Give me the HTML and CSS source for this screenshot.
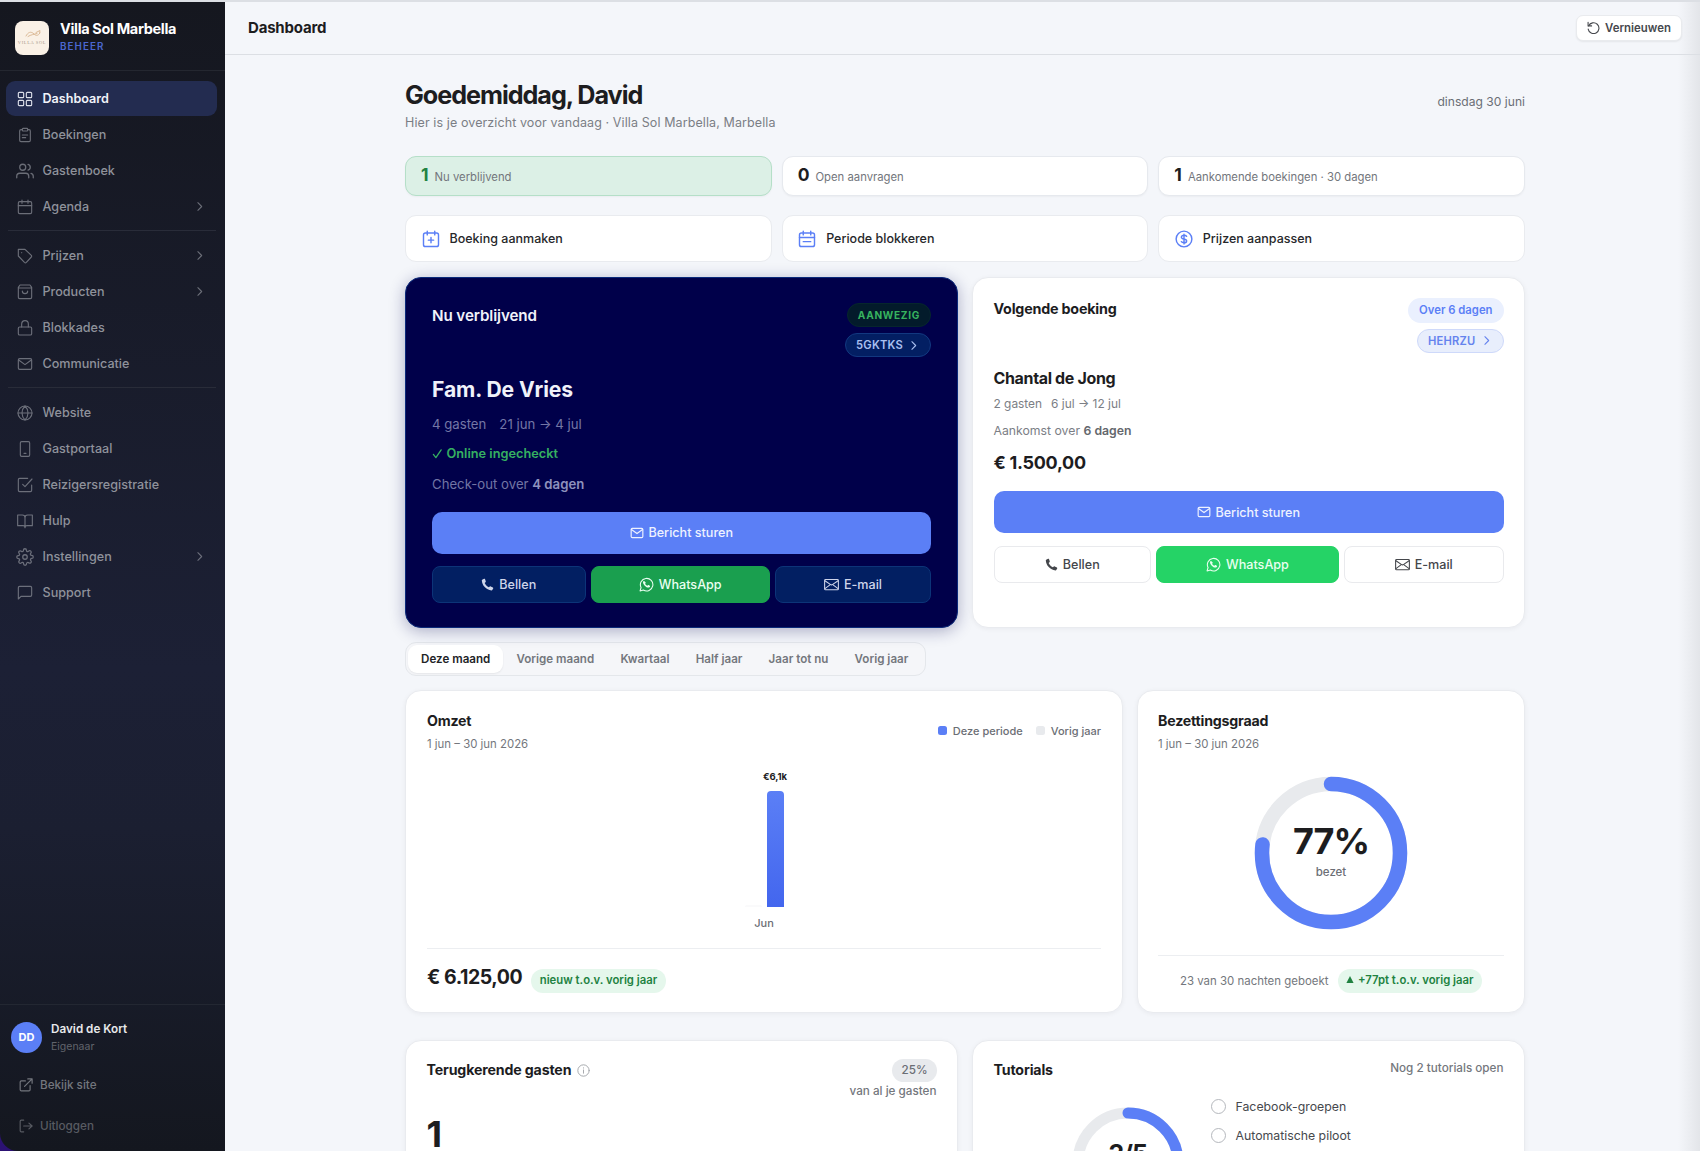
FILE: index.html
```html
<!DOCTYPE html>
<html lang="nl">
<head>
<meta charset="utf-8">
<title>Dashboard</title>
<link rel="stylesheet" href="styles.css">
</head>
<body>
<svg class="defs" width="0" height="0" aria-hidden="true">
  <symbol id="chev" viewBox="0 0 24 24"><path d="m9 5 7 7-7 7"/></symbol>
  <symbol id="mail" viewBox="0 0 24 24"><rect x="2" y="4" width="20" height="16" rx="2"/><path d="m2.500 6 9.500 7 9.500-7"/></symbol>
  <symbol id="phone" viewBox="0 0 24 24"><path fill="currentColor" stroke="none" d="M2.200 3.200 5.600 1.300c.7-.3 1.400 0 1.700.7l1.500 4.200c.2.600 0 1.200-.5 1.600L6.700 9.200c1.600 3.400 4.300 6.300 7.700 8l1.900-1.500c.5-.4 1.100-.5 1.600-.2l4.100 2.100c.7.300.9 1.100.5 1.700l-1.700 3c-.3.500-.8.700-1.300.6C9.500 21.500 2 13.500 1.500 4.400c0-.5.200-.9.700-1.200z"/></symbol>
  <symbol id="wa" viewBox="0 0 24 24"><path d="M1.700 22.300l1.600-5.500A10 10 0 1 1 7 20.800z"/><path fill="currentColor" stroke="none" d="M8.600 6.600c-.3-.5-.9-.5-1.300-.1C5.600 8.300 6.200 11 9.200 14c3 3 6.100 3.900 8 2 .6-.7.700-1.700.1-2l-2-1.100c-.4-.2-.8-.1-1.100.3l-.7.900c-1.500-.5-3-1.900-3.700-3.500l.8-.9c.3-.3.300-.7.100-1.100z"/></symbol>
  <symbol id="env" viewBox="0 0 24 24"><rect x="1" y="4" width="22" height="16.500" rx="1.500"/><path d="m1.500 6 8.500 5.800c1.200.9 2.800.9 4 0L22.500 6M1.500 18.500 9 13M22.500 18.500 15 13"/></symbol>
</svg>
<div class="app">
  <aside class="sidebar">
    <div class="brand">
      <svg class="logo" viewBox="0 0 34 34"><rect width="34" height="34" rx="8" fill="#faf1e6"/><path d="M11 15c2-4 5-5 8-2 2 2 4 2 6-1M13 15.500c3-2 6-2 9-3M21 11.500l4-2-.5 3" fill="none" stroke="#dcbb98" stroke-width="1"/><text x="17" y="23" text-anchor="middle" class="logo-text">VILLA SOL</text></svg>
      <div><div class="brand-name">Villa Sol Marbella</div><div class="brand-sub">BEHEER</div></div>
    </div>
    <nav class="nav">
      <a class="item active"><svg viewBox="0 0 24 24"><rect x="2" y="2" width="8" height="8" rx="1.500"/><rect x="14" y="2" width="8" height="8" rx="1.500"/><rect x="2" y="14" width="8" height="8" rx="1.500"/><rect x="14" y="14" width="8" height="8" rx="1.500"/></svg>Dashboard</a>
      <a class="item"><svg viewBox="0 0 24 24"><path d="M8 4H6a2 2 0 0 0-2 2v14a2 2 0 0 0 2 2h12a2 2 0 0 0 2-2V6a2 2 0 0 0-2-2h-2"/><rect x="8" y="2" width="8" height="4" rx="1"/><path d="M8 12h8M8 16h5"/></svg>Boekingen</a>
      <a class="item"><svg class="wide" viewBox="0 0 24 24"><path d="M17 21v-2a4 4 0 0 0-4-4H5a4 4 0 0 0-4 4v2"/><circle cx="9" cy="7" r="4"/><path d="M23 21v-2a4 4 0 0 0-3-3.870M16 3.130a4 4 0 0 1 0 7.750"/></svg>Gastenboek</a>
      <a class="item"><svg viewBox="0 0 24 24"><rect x="2" y="4" width="20" height="18" rx="2"/><path d="M2 10h20M7.500 1.500v5M16.500 1.500v5"/></svg>Agenda<svg class="chev"><use href="#chev"/></svg></a>
      <hr>
      <a class="item"><svg viewBox="0 0 24 24"><path d="M21.500 13.500 14 21.500a2 2 0 0 1-2.800 0L2 12V2h10l9.500 9a2 2 0 0 1 0 2.500z"/><path d="M7 7h.01"/></svg>Prijzen<svg class="chev"><use href="#chev"/></svg></a>
      <a class="item"><svg viewBox="0 0 24 24"><path d="M4.500 1.500 2 5V20a2 2 0 0 0 2 2h16a2 2 0 0 0 2-2V5l-2.500-3.500zM2 6h20M16 10.500a4 4 0 0 1-8 0"/></svg>Producten<svg class="chev"><use href="#chev"/></svg></a>
      <a class="item"><svg viewBox="0 0 24 24"><rect x="2" y="10.500" width="20" height="12" rx="2"/><path d="M7 10.500V6a5 5 0 0 1 10 0v4.500"/></svg>Blokkades</a>
      <a class="item"><svg><use href="#mail"/></svg>Communicatie</a>
      <hr>
      <a class="item"><svg viewBox="0 0 24 24"><circle cx="12" cy="12" r="10.500"/><path d="M1.500 12h21M12 1.500c6 6 6 15 0 21M12 1.500c-6 6-6 15 0 21"/></svg>Website</a>
      <a class="item"><svg viewBox="0 0 24 24"><rect x="5" y="1" width="14" height="22" rx="2"/><path d="M10.500 18.500h3"/></svg>Gastportaal</a>
      <a class="item"><svg viewBox="0 0 24 24"><path d="m8.500 11 3.500 3.500L22.500 3"/><path d="M22 12v8a2 2 0 0 1-2 2H4a2 2 0 0 1-2-2V4a2 2 0 0 1 2-2h12"/></svg>Reizigersregistratie</a>
      <a class="item"><svg viewBox="0 0 24 24"><path d="M1 3h7a4 4 0 0 1 4 4v15a3 3 0 0 0-3-3H1zM23 3h-7a4 4 0 0 0-4 4v15a3 3 0 0 1 3-3h8z"/></svg>Hulp</a>
      <a class="item"><svg class="wide" viewBox="0 0 24 24"><circle cx="12" cy="12" r="3"/><path d="M19.400 15a1.650 1.650 0 0 0 .33 1.820l.06.060a2 2 0 1 1-2.830 2.830l-.06-.06a1.650 1.650 0 0 0-2.800 1.170V21a2 2 0 0 1-4 0v-.09a1.650 1.650 0 0 0-2.900-1.180l-.06.060a2 2 0 1 1-2.830-2.830l.06-.06a1.650 1.650 0 0 0-1.170-2.800H3a2 2 0 0 1 0-4h.09a1.650 1.650 0 0 0 1.180-2.900l-.06-.06a2 2 0 1 1 2.830-2.830l.06.060a1.650 1.650 0 0 0 2.800-1.170V3a2 2 0 0 1 4 0v.09a1.650 1.650 0 0 0 2.900 1.180l.06-.06a2 2 0 1 1 2.830 2.830l-.06.060a1.650 1.650 0 0 0 1.170 2.800H21a2 2 0 0 1 0 4h-.09a1.650 1.650 0 0 0-1.510 1z"/></svg>Instellingen<svg class="chev"><use href="#chev"/></svg></a>
      <a class="item"><svg viewBox="0 0 24 24"><path d="M22 15a2 2 0 0 1-2 2H6l-4 4V4a2 2 0 0 1 2-2h16a2 2 0 0 1 2 2z"/></svg>Support</a>
    </nav>
    <div class="account">
      <div class="user"><span class="avatar">DD</span><div><div class="user-name">David de Kort</div><div class="user-role">Eigenaar</div></div></div>
      <a class="link"><svg viewBox="0 0 24 24"><path d="M19 13v7a2 2 0 0 1-2 2H4a2 2 0 0 1-2-2V7a2 2 0 0 1 2-2h7M15 1.500h7.500V9M9.500 14.500l13-13"/></svg>Bekijk site</a>
      <a class="link dim"><svg viewBox="0 0 24 24"><path d="M8 2H4a2 2 0 0 0-2 2v16a2 2 0 0 0 2 2h4M17 17l5.500-5L17 7M22 12H8"/></svg>Uitloggen</a>
    </div>
  </aside>

  <div class="main">
    <header class="topbar">
      <h2>Dashboard</h2>
      <button class="refresh"><svg viewBox="0 0 24 24"><path d="M2 2.500v6.500h6.500"/><path d="M3 9a10 10 0 1 1-.8 6"/></svg>Vernieuwen</button>
    </header>
    <main class="content">
      <div class="hello">
        <div><h1>Goedemiddag, David</h1><p>Hier is je overzicht voor vandaag · Villa Sol Marbella, Marbella</p></div>
        <span class="date">dinsdag 30 juni</span>
      </div>
      <div class="thirds stats">
        <div class="stat green"><b>1</b><span>Nu verblijvend</span></div>
        <div class="stat"><b>0</b><span>Open aanvragen</span></div>
        <div class="stat"><b>1</b><span>Aankomende boekingen · 30 dagen</span></div>
      </div>
      <div class="thirds actions">
        <a class="action"><svg viewBox="0 0 24 24"><rect x="2" y="4" width="20" height="18" rx="2.500"/><path d="M7 1.500v5M17 1.500v5M12 10v7M8.500 13.500h7"/></svg>Boeking aanmaken</a>
        <a class="action"><svg viewBox="0 0 24 24"><rect x="2" y="4" width="20" height="18" rx="2.500"/><path d="M7 1.500v5M17 1.500v5M2 10h20M7 15.500h10"/></svg>Periode blokkeren</a>
        <a class="action"><svg viewBox="0 0 24 24"><circle cx="12" cy="12" r="10.500"/><path d="M15.500 8.500c-.6-1-1.800-1.500-3.500-1.500-2 0-3.500.9-3.500 2.500 0 3.500 7 1.500 7 5 0 1.600-1.500 2.500-3.500 2.500-1.700 0-2.900-.5-3.500-1.500M12 5.500v13"/></svg>Prijzen aanpassen</a>
      </div>
      <div class="stays">
        <section class="card stay now">
          <div class="stay-head"><h3>Nu verblijvend</h3><div class="pills"><span class="pill present">AANWEZIG</span><span class="pill code">5GKTKS<svg><use href="#chev"/></svg></span></div></div>
          <div class="name">Fam. De Vries</div>
          <div class="meta"><span>4 gasten</span><span>21 jun → 4 jul</span></div>
          <div class="checked"><svg viewBox="0 0 24 24"><path d="m3 14 5.500 7L20 4"/></svg>Online ingecheckt</div>
          <div class="when">Check-out over <b>4 dagen</b></div>
          <button class="primary"><svg><use href="#mail"/></svg>Bericht sturen</button>
          <div class="contact"><button><svg><use href="#phone"/></svg>Bellen</button><button class="wa"><svg><use href="#wa"/></svg>WhatsApp</button><button><svg><use href="#env"/></svg>E-mail</button></div>
        </section>
        <section class="card stay next">
          <div class="stay-head"><h3>Volgende boeking</h3><div class="pills"><span class="pill soon">Over 6 dagen</span><span class="pill code">HEHRZU<svg><use href="#chev"/></svg></span></div></div>
          <div class="name">Chantal de Jong</div>
          <div class="meta"><span>2 gasten</span><span>6 jul → 12 jul</span></div>
          <div class="when">Aankomst over <b>6 dagen</b></div>
          <div class="price">€ 1.500,00</div>
          <button class="primary"><svg><use href="#mail"/></svg>Bericht sturen</button>
          <div class="contact"><button><svg><use href="#phone"/></svg>Bellen</button><button class="wa"><svg><use href="#wa"/></svg>WhatsApp</button><button><svg><use href="#env"/></svg>E-mail</button></div>
        </section>
      </div>
      <div class="tabs"><span class="on">Deze maand</span><span>Vorige maand</span><span>Kwartaal</span><span>Half jaar</span><span>Jaar tot nu</span><span>Vorig jaar</span></div>
      <div class="charts">
        <section class="card revenue">
          <div class="chart-head"><div><h4>Omzet</h4><p>1 jun – 30 jun 2026</p></div><div class="legend"><i></i>Deze periode<i class="grey"></i>Vorig jaar</div></div>
          <div class="bars">
            <div class="pair"><div class="prev"></div><div class="cur"><span>€6,1k</span><div class="bar"></div></div></div>
            <div class="month">Jun</div>
          </div>
          <div class="total"><strong>€ 6.125,00</strong><span class="up">nieuw t.o.v. vorig jaar</span></div>
        </section>
        <section class="card occupancy">
          <h4>Bezettingsgraad</h4><p>1 jun – 30 jun 2026</p>
          <div class="donut">
            <svg viewBox="0 0 154 154"><circle cx="77" cy="77" r="69" fill="none" stroke="#e8eaed" stroke-width="14.500"/><circle cx="77" cy="77" r="69" fill="none" stroke="#5b7ff6" stroke-width="14.500" stroke-linecap="round" pathLength="100" stroke-dasharray="77 100" transform="rotate(-90 77 77)"/></svg>
            <div class="donut-text"><strong>77%</strong><span>bezet</span></div>
          </div>
          <div class="nights"><span>23 van 30 nachten geboekt</span><span class="up"><svg viewBox="0 0 10 10"><path d="M5 .5 9.500 9.500h-9z"/></svg>+77pt t.o.v. vorig jaar</span></div>
        </section>
      </div>
      <div class="bottom">
        <section class="card returning">
          <div class="row"><h4>Terugkerende gasten<svg viewBox="0 0 24 24"><circle cx="12" cy="12" r="10.500"/><path d="M12 11v6M12 7v.5"/></svg></h4><div class="share"><span>25%</span><em>van al je gasten</em></div></div>
          <div class="count">1</div>
        </section>
        <section class="card tutorials">
          <div class="row"><h4>Tutorials</h4><em>Nog 2 tutorials open</em></div>
          <div class="tut">
            <div class="donut small"><svg viewBox="0 0 112 112"><circle cx="56" cy="56" r="50" fill="none" stroke="#e8eaed" stroke-width="11"/><circle cx="56" cy="56" r="50" fill="none" stroke="#5b7ff6" stroke-width="11" stroke-linecap="round" pathLength="100" stroke-dasharray="60 100" transform="rotate(-90 56 56)"/></svg><div class="donut-text"><strong>3/5</strong></div></div>
            <ul><li><i></i>Facebook-groepen</li><li><i></i>Automatische piloot</li></ul>
          </div>
        </section>
      </div>
    </main>
  </div>
</div>
</body>
</html>
```
FILE: styles.css
```css
* { box-sizing: border-box; margin: 0; padding: 0; }
body { width: 1700px; height: 1151px; overflow: hidden; background: #f4f6fa; font-family: Inter, "Liberation Sans", sans-serif; color: #1d1d1f; -webkit-font-smoothing: antialiased; }
svg { fill: none; stroke: currentColor; stroke-width: 2; stroke-linecap: round; stroke-linejoin: round; flex: none; }
.defs { position: absolute; }
button { font-family: inherit; }
.app { display: flex; height: 1151px; border-top: 2px solid #dcdfe4; background: #2c1273; overflow: hidden; }

.sidebar { width: 225px; height: 1149px; display: flex; flex-direction: column; background: linear-gradient(180deg, #15171f 0%, #1c2035 58%, #1b1f31 72%, #14171f 100%); border-bottom-left-radius: 18px; }
.brand { height: 69px; display: flex; gap: 11px; padding: 19px 0 0 15px; border-bottom: 1px solid #242730; }
.logo { width: 34px; height: 34px; stroke: none; }
.logo-text { font: 4.500px "Liberation Serif", serif; letter-spacing: .6px; fill: #a99a8c; stroke: none; }
.brand-name { font-size: 14.500px; font-weight: 700; line-height: 18px; letter-spacing: -.35px; color: #fff; margin-top: -1px; white-space: nowrap; }
.brand-sub { font-size: 9.800px; font-weight: 600; letter-spacing: 1.100px; line-height: 14px; color: #4b67cf; margin-top: 2px; }
.nav { flex: 1; padding: 10px 8px 0 6px; display: flex; flex-direction: column; gap: 1px; }
.item { height: 35px; border-radius: 9px; display: flex; align-items: center; padding: 0 11px; color: #8f929b; font-size: 12.600px; font-weight: 500; }
.item svg { width: 16px; height: 16px; margin-right: 9.500px; stroke-width: 1.700; opacity: .7; }
.item svg.wide { width: 18px; height: 18px; margin: 0 8.500px 0 -1px; }
.item svg.chev { width: 13px; height: 13px; margin: 0 0 0 auto; stroke-width: 2; }
.item.active { background: #232c50; color: #f1f3fa; font-weight: 600; }
.item.active svg { opacity: .9; }
.nav hr { border: 0; height: 1px; background: #292c39; margin: 5px 1px 6px 2px; }
.account { height: 147px; border-top: 1px solid #232732; padding: 15px 0 0 11px; }
.user { display: flex; gap: 9px; height: 34px; align-items: center; }
.avatar { width: 31px; height: 31px; border-radius: 50%; background: #5b7ff6; color: #fff; font-size: 11px; font-weight: 700; display: grid; place-items: center; }
.user-name { font-size: 11.700px; font-weight: 600; line-height: 18px; color: #e7e8ea; }
.user-role { font-size: 10.500px; line-height: 16px; color: #61646c; margin-top: 1px; }
.link { display: flex; align-items: center; height: 40.500px; padding-left: 8px; font-size: 11.700px; font-weight: 500; color: #73767d; margin-top: 11px; }
.link.dim { color: #585b62; margin-top: 0; }
.link svg { width: 14px; height: 14px; margin-right: 7px; }

.main { flex: 1; background: linear-gradient(90deg, transparent 1453px, #e3e5e9 1475px), #f4f6fa; }
.topbar { height: 53px; border-bottom: 1px solid #dcdfe4; padding: 0 18px 1px 23px; display: flex; align-items: center; justify-content: space-between; }
.topbar h2 { font-size: 15px; font-weight: 700; letter-spacing: -.2px; }
.refresh { width: 106px; height: 26px; border: 1px solid #e9ebee; border-radius: 7px; background: #fff; box-shadow: 0 1px 2px #0001; font-size: 11.400px; font-weight: 600; color: #46484d; display: flex; align-items: center; justify-content: center; gap: 5px; }
.refresh svg { width: 13px; height: 13px; }
.content { width: 1120px; margin: 0 0 0 180px; }
.hello { height: 101px; display: flex; justify-content: space-between; padding-top: 23px; }
h1 { font-size: 25.200px; font-weight: 700; letter-spacing: -1.050px; line-height: 35px; }
.hello p { font-size: 12.500px; line-height: 20px; color: #7b7e85; letter-spacing: .1px; }
.date { font-size: 12.100px; line-height: 20px; color: #6b6e75; margin-top: 14px; }
.thirds { display: grid; grid-template-columns: repeat(3, 1fr); gap: 10px; }
.stat { height: 40px; background: #fff; border: 1px solid #e6e9ee; border-radius: 11px; box-shadow: 0 1px 2px #0000000a; display: flex; align-items: baseline; gap: 6px; padding: 6px 0 0 15px; }
.stat b { font-size: 17.500px; line-height: 24px; }
.stat span { font-size: 11.300px; color: #73767c; }
.stat.green { background: #dcf0e6; border-color: #b5dfc8; }
.stat.green b { color: #218241; }
.actions { margin-top: 19px; }
.action { height: 47px; background: #fff; border: 1px solid #e9ebef; border-radius: 11px; display: flex; align-items: center; gap: 10px; padding-left: 15.500px; font-size: 12.500px; font-weight: 500; color: #26272a; }
.action svg { width: 18px; height: 18px; color: #5b7ff6; stroke-width: 1.900; }

.card { background: #fff; border: 1px solid #e9ebef; border-radius: 16px; box-shadow: 0 1px 5px #1018280d; }
.stays { display: grid; grid-template-columns: 1fr 1fr; gap: 14px; margin-top: 15px; }
.stay { height: 351px; padding: 20px 20.500px; }
.stay.now { padding: 25px 26px; background: #00004a; border-color: #0b2a7a; box-shadow: 0 3px 16px #14185c55; color: #f0f2fa; }
.stay-head { display: flex; justify-content: space-between; height: 68px; }
.now .stay-head { height: 70px; }
h3 { font-size: 14.300px; font-weight: 700; line-height: 21px; letter-spacing: -.2px; }
.now h3 { margin-top: 1.500px; font-size: 15.200px; font-weight: 600; letter-spacing: -.1px; }
.pills { display: flex; flex-direction: column; align-items: flex-end; gap: 6px; }
.pill { height: 24px; display: flex; align-items: center; border-radius: 13px; padding: 0 10px; border: 1px solid transparent; font-size: 11.200px; font-weight: 600; }
.pill.present { background: #031b2b; border-color: #06262d; color: #37b35f; font-size: 10.100px; font-weight: 700; letter-spacing: .7px; }
.pill.soon { height: 25px; background: #eaf0fe; color: #5b7ff6; font-size: 11.300px; margin-top: -.5px; }
.pill.code { color: #6583ee; background: #e8eefc; border-color: #ced9fa; letter-spacing: .2px; }
.pill svg { width: 13px; height: 13px; margin-left: 4px; }
.now .pill.code { background: #031f63; border-color: #123880; color: #a9bff0; }
.name { font-size: 16px; font-weight: 700; letter-spacing: -.35px; line-height: 24px; }
.now .name { font-size: 21.100px; line-height: 30px; margin-top: 1.500px; letter-spacing: -.1px; }
.meta { display: flex; gap: 9px; font-size: 11.900px; line-height: 18px; color: #7b7e85; margin-top: 5px; }
.now .meta { font-size: 13.200px; gap: 13px; margin-top: 10.500px; color: #7477a6; }
.checked { font-size: 12.750px; font-weight: 600; line-height: 18px; color: #35b061; margin-top: 11.500px; display: flex; align-items: center; gap: 3.500px; }
.checked svg { width: 11px; height: 11px; stroke-width: 2.800; }
.when { font-size: 12.250px; line-height: 18px; color: #7b7e85; margin-top: 9px; }
.when b { font-weight: 600; color: #64676d; }
.now .when { font-size: 13.200px; color: #7275a4; margin-top: 12px; }
.now .when b { color: #8e92bd; }
.price { font-size: 18px; font-weight: 700; line-height: 24px; margin-top: 11px; letter-spacing: -.3px; }
.primary { width: 100%; height: 42px; border: 0; border-radius: 10px; background: #5b7ff6; color: #eef2ff; font-size: 12.600px; font-weight: 500; display: flex; align-items: center; justify-content: center; gap: 4.500px; margin-top: 16px; }
.now .primary { margin-top: 19px; }
.primary svg { width: 14px; height: 14px; }
.contact { display: grid; grid-template-columns: 157.500px 183px 159.500px; gap: 5px; margin-top: 12.500px; }
.now .contact { grid-template-columns: 153.500px 179.500px 156px; }
.contact button { height: 37px; border: 1px solid #e9eaed; border-radius: 8px; background: #fff; color: #44464b; font-size: 12.600px; font-weight: 500; display: flex; align-items: center; justify-content: center; gap: 5px; }
.contact svg { width: 15px; height: 15px; stroke-width: 1.700; }
.contact button:first-child svg { width: 13px; height: 13px; }
.contact button.wa { background: #25d366; border-color: #25d366; color: #e9fff0; }
.now .contact button { background: #021f62; border-color: #0c3478; color: #cfd5ea; }
.now .contact button.wa { background: #1a9f4f; border-color: #1a9f4f; color: #eafff1; }

.tabs { width: 521px; height: 34px; margin-top: 14px; border: 1px solid #e4e7eb; border-radius: 11px; background: #f5f6f9; display: flex; align-items: center; padding-left: 2px; font-size: 11.600px; font-weight: 600; color: #74777d; white-space: nowrap; }
.tabs span { height: 28px; line-height: 28px; padding: 0 13.100px; }
.tabs .on { border-radius: 9px; background: #fff; box-shadow: 0 1px 2px #0001; color: #222326; }
.charts { display: grid; grid-template-columns: 718px 388px; gap: 14px; margin-top: 14px; }
.revenue, .occupancy { height: 323px; padding: 20px 21px 0; }
.occupancy { padding: 20px 20px 0; }
h4 { font-size: 14.200px; font-weight: 700; line-height: 20px; letter-spacing: -.2px; white-space: nowrap; }
.chart-head { display: flex; justify-content: space-between; align-items: center; height: 41px; }
.card p { font-size: 11.400px; line-height: 16px; margin-top: 5px; color: #74777d; }
.legend { display: flex; align-items: center; font-size: 11px; font-weight: 500; color: #6b6e75; height: 20px; margin-top: -2px; }
.legend i { width: 9px; height: 9px; border-radius: 2.500px; background: #5b7ff6; margin-right: 6px; }
.legend i.grey { background: #e8eaed; margin-left: 13px; }
.bars { height: 197px; border-bottom: 1px solid #eceef1; display: flex; flex-direction: column; align-items: center; padding-top: 17px; }
.pair { display: flex; align-items: flex-end; gap: 5px; height: 138px; }
.prev { width: 17px; height: 2px; background: #fafafb; border-radius: 2px 2px 0 0; }
.cur { width: 17px; display: flex; flex-direction: column; align-items: center; }
.cur span { font-size: 9.500px; font-weight: 700; line-height: 14px; margin-bottom: 7px; letter-spacing: -.1px; }
.bar { width: 17px; height: 116px; border-radius: 4px 4px 0 0; background: linear-gradient(#5b7ff6, #4366ee); }
.month { font-size: 11px; font-weight: 500; line-height: 14px; margin-top: 9px; color: #6b6e75; }
.total { display: flex; align-items: center; gap: 9px; height: 56px; }
.total strong { font-size: 19.500px; letter-spacing: -.45px; }
.up { height: 24px; line-height: 22px; border-radius: 12px; background: #e5f7ec; color: #218241; font-size: 11.300px; font-weight: 600; padding: 0 8.500px; white-space: nowrap; }
.up svg { width: 8px; height: 9px; fill: currentColor; stroke: none; margin-right: 4px; }
.total .up { margin-top: 7.500px; }
.donut { position: relative; width: 154px; height: 154px; margin: 23.500px auto 0; }
.donut svg { display: block; width: 100%; height: 100%; }
.donut-text { position: absolute; inset: 0; display: flex; flex-direction: column; align-items: center; padding-top: 42.500px; }
.donut-text strong { font-size: 36px; line-height: 46px; letter-spacing: -1.100px; }
.donut-text span { font-size: 11.500px; font-weight: 500; line-height: 16px; color: #6b6e75; }
.nights { display: flex; justify-content: center; align-items: center; gap: 9px; height: 50px; margin-top: 25.500px; border-top: 1px solid #eceef1; font-size: 11.450px; color: #74777d; white-space: nowrap; }
.bottom { display: grid; grid-template-columns: 1fr 1fr; gap: 14px; margin-top: 26.500px; }
.returning, .tutorials { height: 300px; padding: 18.500px 20.500px; }
.row { display: flex; justify-content: space-between; }
.row h4 { display: flex; align-items: center; gap: 6px; height: 22px; letter-spacing: -.15px; }
.row h4 svg { width: 13px; height: 13px; color: #a0a3a8; stroke-width: 1.700; }
.row em { font-style: normal; font-size: 11.700px; font-weight: 500; line-height: 19px; color: #74777d; }
.share { display: flex; flex-direction: column; align-items: flex-end; }
.share span { height: 23px; line-height: 22px; border-radius: 12px; padding: 0 9px; background: #e8eaed; color: #6b6e75; font-size: 11.700px; font-weight: 500; }
.count { font-size: 36px; font-weight: 700; line-height: 40px; margin-top: 12.500px; }
.tut { display: flex; margin-top: 15px; }
.donut.small { width: 112px; height: 112px; margin: 11px 27.500px 0 78px; }
.small .donut-text { padding-top: 25px; }
.small strong { font-size: 25px; line-height: 44px; }
.tut ul { list-style: none; }
.tut li { display: flex; align-items: center; gap: 9.500px; height: 20px; margin-bottom: 9.300px; font-size: 12.300px; color: #46484d; }
.tut i { width: 15px; height: 15px; border: 1.300px solid #b5b8bd; border-radius: 50%; }
```
